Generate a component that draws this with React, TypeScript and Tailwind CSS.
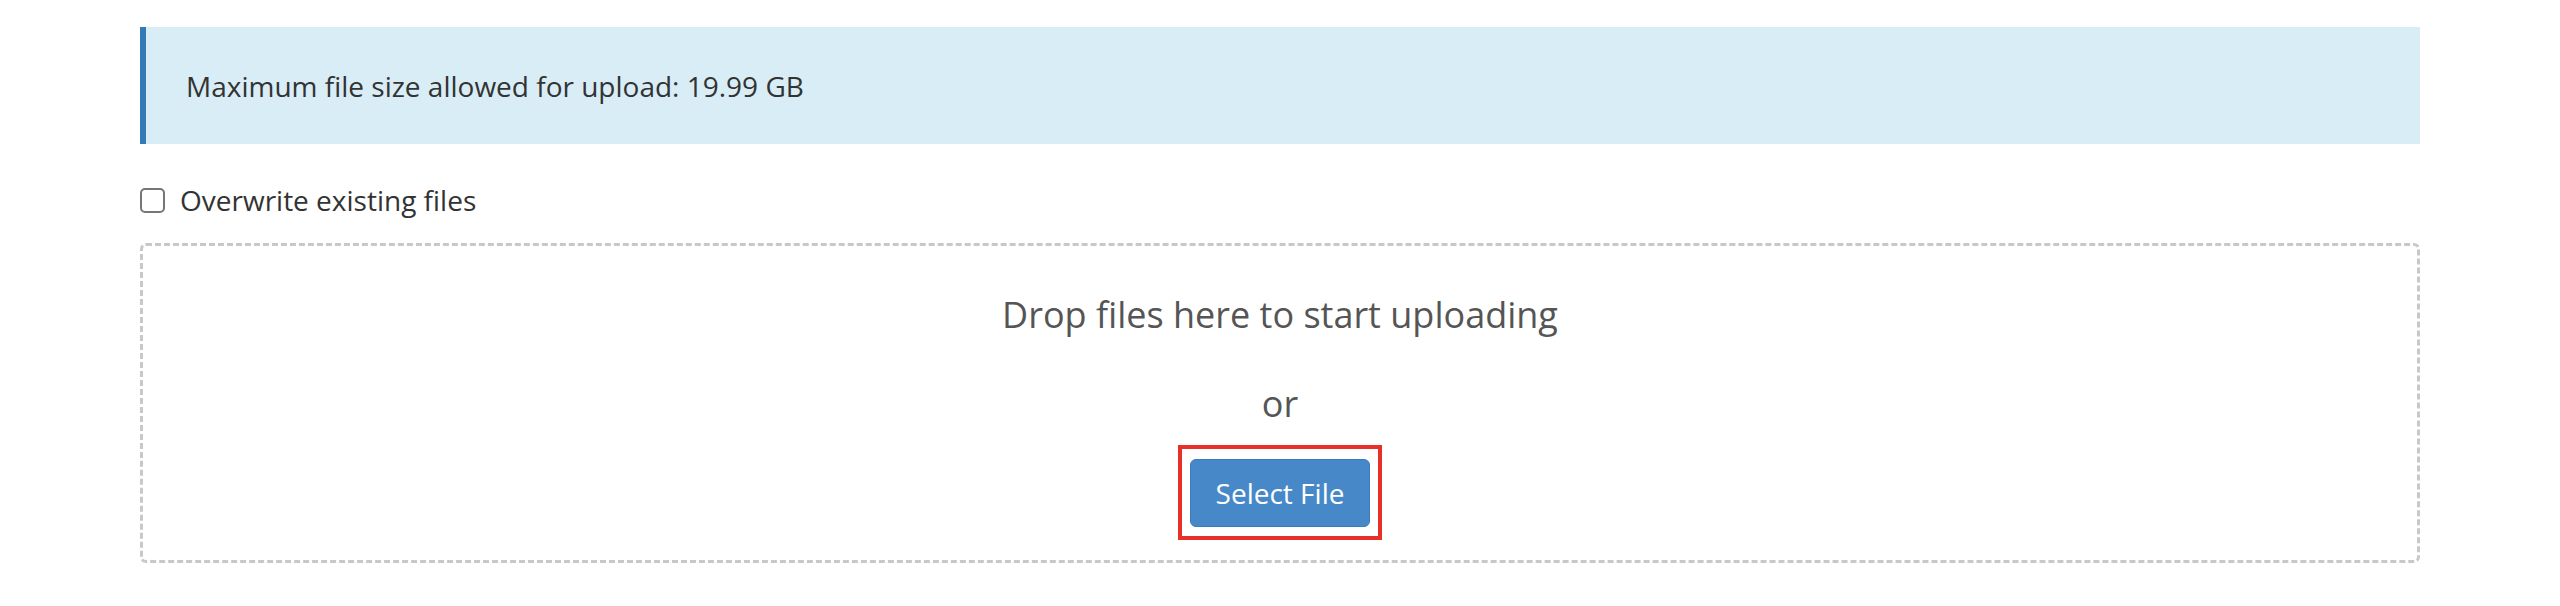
import { useState } from 'react';

export default function App() {
  const [overwrite, setOverwrite] = useState(false);

  return (
    <div className="w-[2560px] h-[606px] bg-white px-[140px] pt-[27px] font-['Open_Sans',sans-serif]">
      {/* Aviso de tamaño máximo */}
      <div className="h-[117px] flex items-center bg-[#d9edf7] border-l-[6px] border-[#337ab7] pl-[40px]">
        <span className="text-[28px] text-[#333]">Maximum file size allowed for upload: 19.99 GB</span>
      </div>

      <label className="mt-[36px] h-[40px] flex items-center gap-[15px] cursor-pointer">
        <input
          type="checkbox"
          checked={overwrite}
          onChange={(e) => setOverwrite(e.target.checked)}
          className="appearance-none w-[25px] h-[25px] border-2 border-[#767676] rounded-[5px] bg-white"
        />
        <span className="text-[28px] text-[#333]">Overwrite existing files</span>
      </label>

      {/* Zona de arrastre */}
      <div className="mt-[23px] h-[320px] border-[3px] border-dashed border-[#c8c8c8] rounded-[6px] flex flex-col items-center pt-[44px]">
        <p className="text-[36px] leading-[49px] text-[#555]">Drop files here to start uploading</p>
        <p className="mt-[40px] text-[36px] leading-[49px] text-[#555]">or</p>
        <div className="mt-[17px] border-4 border-[#e8302a] px-[8px] pt-[10px] pb-[9px]">
          <button
            type="button"
            className="w-[180px] h-[68px] bg-[#4789c8] border border-[#3a7bbb] rounded-[6px] text-[28px] text-white"
          >
            Select File
          </button>
        </div>
      </div>
    </div>
  );
}
